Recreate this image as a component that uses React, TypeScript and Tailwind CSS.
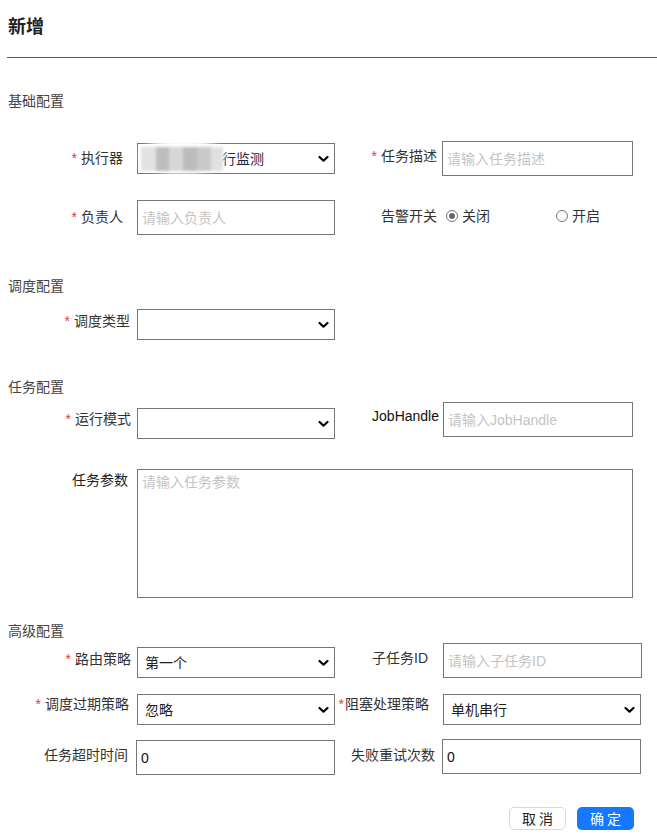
import React from "react";

const FONT = '"Liberation Sans", "Noto Sans CJK SC", sans-serif';

function Star() {
  return <span className="text-[#e4393c] mr-[4px]">*</span>;
}

function Chevron() {
  return (
    <svg width="11" height="7" viewBox="0 0 11 7" className="absolute right-[5px] top-1/2 -translate-y-1/2">
      <path d="M1.5 1.5 L5.5 5.2 L9.5 1.5" stroke="#000" strokeWidth="2.2" fill="none" strokeLinecap="round" strokeLinejoin="round" />
    </svg>
  );
}

function Select({ w, text, className = "" }: { w: string; text?: string; className?: string }) {
  return (
    <div className={`relative ${w} h-[31px] border border-[#767676] bg-white flex items-center pl-[7px] text-[#222] ${className}`}>
      <span>{text}</span>
      <Chevron />
    </div>
  );
}

function Input({ w, placeholder, value, className = "" }: { w: string; placeholder?: string; value?: string; className?: string }) {
  return (
    <div className={`${w} h-[35px] border border-[#767676] bg-white flex items-center pl-[4px] ${className}`}>
      {value ? <span className="text-[#111]">{value}</span> : <span className="text-[#c4c4c4]">{placeholder}</span>}
    </div>
  );
}

function Radio({ checked }: { checked?: boolean }) {
  return (
    <span className="w-[12px] h-[12px] rounded-full border border-[#767676] bg-white flex items-center justify-center">
      {checked && <span className="w-[6px] h-[6px] rounded-full bg-[#666]" />}
    </span>
  );
}

export default function App() {
  return (
    <div className="w-[657px] h-[836px] bg-white text-[14px] leading-5 text-[#333] overflow-hidden" style={{ fontFamily: FONT }}>
      <div className="pl-2 pt-[15px] h-[57px] text-[18px] leading-6 font-bold text-[#222]">新增</div>
      <div className="ml-[7px] h-px bg-[#555]" />

      <div className="mt-[33px] pl-2 text-[#444]">基础配置</div>

      {/* Row A */}
      <div className="mt-[30px] flex items-start h-[35px]">
        <div className="w-[137px] pr-[14px] pt-[7px] text-right"><Star />执行器</div>
        <div className="relative w-[198px] h-[31px] mt-[2px] border border-[#767676] bg-white flex items-center text-[#1d2550]">
          <span className="pl-[84px]">行监测</span>
          <Chevron />
          <div className="absolute left-[2px] top-[-6px] w-[84px] h-[36px] rounded-[50%] bg-white blur-[3px]" />
          <div className="absolute left-[3px] top-[3px] h-[24px] flex blur-[1.5px]">
            <div className="w-[15px] bg-[#e2e2e2]" />
            <div className="w-[13px] bg-[#bdbdbd]" />
            <div className="w-[14px] bg-[#d6d6d6]" />
            <div className="w-[14px] bg-[#bcbcbc]" />
            <div className="w-[14px] bg-[#c9c9c9]" />
            <div className="w-[12px] bg-[#e0e0e0]" />
          </div>
        </div>
        <div className="w-[107px] pr-[5px] pt-[5px] text-right"><Star />任务描述</div>
        <Input w="w-[191px]" placeholder="请输入任务描述" />
      </div>

      {/* Row B */}
      <div className="mt-[24px] flex items-start h-[35px]">
        <div className="w-[137px] pr-[14px] pt-[7px] text-right"><Star />负责人</div>
        <Input w="w-[198px]" placeholder="请输入负责人" />
        <div className="w-[107px] pr-[5px] pt-[6px] text-right">告警开关</div>
        <div className="pt-[6px] flex items-center">
          <div className="flex items-center ml-[4px] gap-[4px]">
            <Radio checked />
            <span>关闭</span>
          </div>
          <div className="flex items-center ml-[66px] gap-[4px]">
            <Radio />
            <span>开启</span>
          </div>
        </div>
      </div>

      <div className="mt-[41px] pl-2 text-[#444]">调度配置</div>

      {/* Row C */}
      <div className="mt-[13px] flex items-start h-[31px]">
        <div className="w-[137px] pr-[7px] pt-[2px] text-right"><Star />调度类型</div>
        <Select w="w-[198px]" />
      </div>

      <div className="mt-[37px] pl-2 text-[#444]">任务配置</div>

      {/* Row D */}
      <div className="mt-[5px] flex items-start h-[37px]">
        <div className="w-[137px] pr-[6px] pt-[7px] text-right"><Star />运行模式</div>
        <Select w="w-[198px]" className="mt-[6px]" />
        <div className="w-[108px] pr-[4px] pt-[4px] text-right text-[#111]">JobHandle</div>
        <Input w="w-[190px]" placeholder="请输入JobHandle" />
      </div>

      {/* Row E */}
      <div className="mt-[30px] flex items-start">
        <div className="w-[137px] pr-[9px] pt-[1px] text-right text-[#222]">任务参数</div>
        <div className="w-[496px] h-[129px] border border-[#767676] pl-[4px] pt-[2px] text-[#c4c4c4]">请输入任务参数</div>
      </div>

      <div className="mt-[23px] pl-2 text-[#444]">高级配置</div>

      {/* Row F */}
      <div className="mt-[2px] flex items-start h-[35px]">
        <div className="w-[137px] pr-[6px] pt-[6px] text-right"><Star />路由策略</div>
        <Select w="w-[198px]" text="第一个" className="mt-[4px]" />
        <div className="w-[108px] pr-[15px] pt-[5px] text-right">子任务ID</div>
        <Input w="w-[199px]" placeholder="请输入子任务ID" />
      </div>

      {/* Row G */}
      <div className="mt-[16px] flex items-start h-[31px]">
        <div className="w-[137px] pr-[8px] pt-[0px] text-right"><Star />调度过期策略</div>
        <Select w="w-[198px]" text="忽略" />
        <div className="w-[108px] pr-[14px] pt-[0px] text-right"><span className="text-[#e4393c] mr-[1px]">*</span>阻塞处理策略</div>
        <Select w="w-[198px]" text="单机串行" />
      </div>

      {/* Row H */}
      <div className="mt-[14px] flex items-start h-[36px]">
        <div className="w-[136px] pr-[8px] pt-[6px] text-right">任务超时时间</div>
        <Input w="w-[199px]" value="0" className="mt-[1px]" />
        <div className="w-[107px] pr-[7px] pt-[6px] text-right">失败重试次数</div>
        <Input w="w-[199px]" value="0" />
      </div>

      {/* Buttons */}
      <div className="mt-[32px] flex justify-end pr-[23px] gap-[11px]">
        <button className="w-[57px] h-[23px] rounded-[5px] border border-[#d9d9d9] bg-white text-[#222] text-[14px] leading-none tracking-[3px] pl-[3px]">取消</button>
        <button className="w-[57px] h-[23px] rounded-[5px] bg-[#1677ff] text-white text-[14px] leading-none tracking-[3px] pl-[3px]">确定</button>
      </div>
    </div>
  );
}
